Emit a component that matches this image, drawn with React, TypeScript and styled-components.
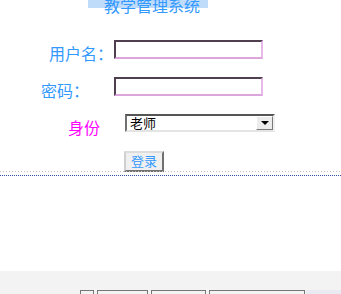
import React from "react";
import styled, { createGlobalStyle } from "styled-components";

const GlobalStyle = createGlobalStyle`
    html, body {
        margin: 0;
        padding: 0;
        background: #ffffff;
        font-family: "Noto Sans CJK SC", "Liberation Sans", sans-serif;
    }
`;

const colors = {
    blue: "#3399ff",
    magenta: "#ff00ff",
    titleBar: "#bfdcfb",
};

const Page = styled.div`
    width: 341px;
    display: flex;
    flex-direction: column;
`;

const Header = styled.div`
    display: flex;
    height: 16px;
    margin-top: -3px;
    padding-left: 88px;
`;

const Title = styled.span`
    height: 16px;
    line-height: 16px;
    font-size: 16px;
    padding: 0 8px 0 16px;
    color: ${colors.blue};
    background: linear-gradient(
        to bottom,
        transparent 3px,
        ${colors.titleBar} 3px,
        ${colors.titleBar} 11px,
        transparent 11px
    );
`;

const Form = styled.form`
    display: flex;
    flex-direction: column;
    gap: 18px;
    margin-top: 27px;
`;

const Row = styled.div`
    display: flex;
    align-items: flex-start;
    height: 19px;
`;

const Label = styled.label<{ $left: number; $width: number; $color?: string }>`
    margin-left: ${(p) => p.$left}px;
    width: ${(p) => p.$width}px;
    height: 14px;
    margin-top: 5px;
    font-size: 16px;
    line-height: 16px;
    color: ${(p) => p.$color ?? colors.blue};
    white-space: nowrap;
`;

const TextInput = styled.input`
    box-sizing: border-box;
    width: 149px;
    height: 19px;
    margin: 0;
    padding: 0 2px;
    border-style: solid;
    border-width: 2px;
    border-color: #4f3f4f #e8b8e8 #dca6dc #4f3f4f;
    background: #ffffff;
    outline: none;
`;

const Select = styled.div`
    box-sizing: border-box;
    width: 150px;
    height: 18px;
    display: flex;
    align-items: center;
    border-style: solid;
    border-width: 2px;
    border-color: #555555 #f0f0f0 #e4e4e4 #707070;
    background: #ffffff;
    font-size: 13px;
    color: #000000;
    padding-left: 3px;
`;

const SelectValue = styled.span`
    flex: 1;
    line-height: 14px;
`;

const ArrowButton = styled.span`
    box-sizing: border-box;
    width: 17px;
    height: 14px;
    display: flex;
    align-items: center;
    justify-content: center;
    background: #ececec;
    border-style: solid;
    border-width: 1px;
    border-color: #ffffff #7a7a7a #7a7a7a #ffffff;
    &::after {
        content: "";
        border-left: 4px solid transparent;
        border-right: 4px solid transparent;
        border-top: 4px solid #000000;
    }
`;

const SubmitRow = styled.div`
    display: flex;
    height: 21px;
    padding-left: 124px;
`;

const SubmitButton = styled.button`
    box-sizing: border-box;
    width: 40px;
    height: 21px;
    margin: 0;
    padding: 0 0 1px;
    font-family: inherit;
    font-size: 13px;
    line-height: 14px;
    color: ${colors.blue};
    background: #f0f0f0;
    border-style: solid;
    border-width: 2px;
    border-color: #dcdcdc #707070 #707070 #d0d0d0;
`;

const GrayRule = styled.div`
    height: 1px;
    margin-top: -1px;
    background-image: linear-gradient(to right, #c0c0c0 1px, transparent 1px);
    background-size: 3px 1px;
`;

const BlueRule = styled.div`
    margin-top: 3px;
    border-top: 1px dotted #2f4f9f;
`;

const Footer = styled.div`
    margin-top: 95px;
    height: 40px;
    background: #f3f3f3;
    padding: 19px 0 0 80px;
    display: flex;
    gap: 3px;
`;

const FooterBox = styled.div<{ $width: number }>`
    box-sizing: border-box;
    width: ${(p) => p.$width}px;
    height: 20px;
    border: 1px solid #777777;
    background: #f3f3f3;
`;

const FooterFill = styled.div`
    flex: 1;
    height: 20px;
    margin-left: -2px;
    background: #eaeaf2;
`;

export default function App() {
    return (
        <Page>
            <GlobalStyle />
            <Header>
                <Title>教学管理系统</Title>
            </Header>
            <Form onSubmit={(e) => e.preventDefault()}>
                <Row>
                    <Label $left={49} $width={65}>用户名：</Label>
                    <TextInput type="text" />
                </Row>
                <Row>
                    <Label $left={41} $width={73}>密码：</Label>
                    <TextInput type="password" />
                </Row>
                <Row>
                    <Label $left={68} $width={57} $color={colors.magenta}>身份</Label>
                    <Select role="combobox">
                        <SelectValue>老师</SelectValue>
                        <ArrowButton />
                    </Select>
                </Row>
                <SubmitRow>
                    <SubmitButton type="submit">登录</SubmitButton>
                </SubmitRow>
            </Form>
            <GrayRule />
            <BlueRule />
            <Footer>
                <FooterBox $width={14} />
                <FooterBox $width={51} />
                <FooterBox $width={55} />
                <FooterBox $width={96} />
                <FooterFill />
            </Footer>
        </Page>
    );
}
